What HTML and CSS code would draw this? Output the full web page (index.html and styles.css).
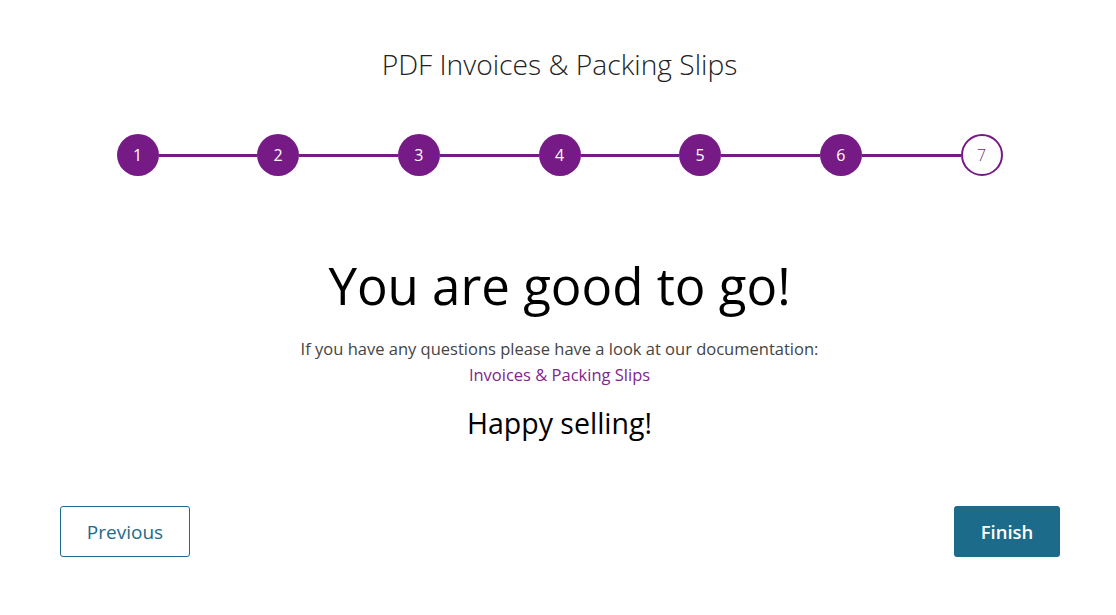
FILE: index.html
```html
<!DOCTYPE html>
<html lang="en">
<head>
<meta charset="utf-8">
<title>PDF Invoices &amp; Packing Slips</title>
<link rel="stylesheet" href="styles.css">
</head>
<body>
<div class="wizard">
  <h1 class="wizard-title">PDF Invoices &amp; Packing Slips</h1>
  <div class="steps">
    <div class="step done">1</div>
    <div class="connector"></div>
    <div class="step done">2</div>
    <div class="connector"></div>
    <div class="step done">3</div>
    <div class="connector"></div>
    <div class="step done">4</div>
    <div class="connector"></div>
    <div class="step done">5</div>
    <div class="connector"></div>
    <div class="step done">6</div>
    <div class="connector"></div>
    <div class="step current">7</div>
  </div>
  <div class="content">
    <h2 class="headline">You are good to go!</h2>
    <p class="info">If you have any questions please have a look at our documentation:<br><a class="doc-link" href="#">Invoices &amp; Packing Slips</a></p>
    <p class="happy">Happy selling!</p>
  </div>
  <div class="actions">
    <a class="btn btn-secondary" href="#">Previous</a>
    <a class="btn btn-primary" href="#">Finish</a>
  </div>
</div>
</body>
</html>
```

FILE: styles.css
```css
html, body {
  margin: 0;
  padding: 0;
  background: #ffffff;
}
body {
  font-family: "Open Sans", "Noto Sans", sans-serif;
  color: #1d1d1d;
}
.wizard {
  width: 1116px;
  height: 615px;
  box-sizing: border-box;
  padding-top: 44px;
}
.wizard-title {
  margin: 0;
  text-align: center;
  font-weight: 300;
  font-size: 28.2px;
  line-height: 40px;
  color: #222;
  padding-left: 3px;
}
.steps {
  width: 886px;
  margin: 50px auto 0;
  padding-left: 3px;
  display: flex;
  align-items: center;
}
.step {
  width: 42px;
  height: 42px;
  box-sizing: border-box;
  border-radius: 50%;
  display: flex;
  align-items: center;
  justify-content: center;
  font-size: 16px;
  flex: none;
}
.step.done {
  background: #761a86;
  color: #ffffff;
}
.step.current {
  background: #ffffff;
  border: 2px solid #761a86;
  color: #761a86;
  font-weight: 300;
}
.connector {
  flex: 1;
  height: 3px;
  background: #761a86;
}
.content {
  text-align: center;
  padding-left: 3px;
  margin-top: 77px;
}
.headline {
  margin: 0;
  font-weight: 400;
  font-size: 51px;
  line-height: 64px;
  color: #000;
}
.info {
  margin: 19px 0 0;
  font-size: 16.5px;
  line-height: 26px;
  color: #444;
}
.doc-link {
  color: #82258f;
  text-decoration: none;
}
.happy {
  margin: 15px 0 0;
  font-size: 28.5px;
  line-height: 40px;
  color: #000;
}
.actions {
  display: flex;
  justify-content: space-between;
  padding: 0 56px 0 60px;
  margin-top: 63px;
}
.btn {
  height: 51px;
  box-sizing: border-box;
  border-radius: 3px;
  display: flex;
  align-items: center;
  justify-content: center;
  font-size: 19px;
  text-decoration: none;
}
.btn-secondary {
  width: 130px;
  border: 1px solid #1d6b8a;
  color: #1d6b8a;
  background: #fff;
}
.btn-primary {
  width: 106px;
  background: #1d6b8a;
  color: #fff;
  font-weight: 600;
  font-size: 18.5px;
}
```
